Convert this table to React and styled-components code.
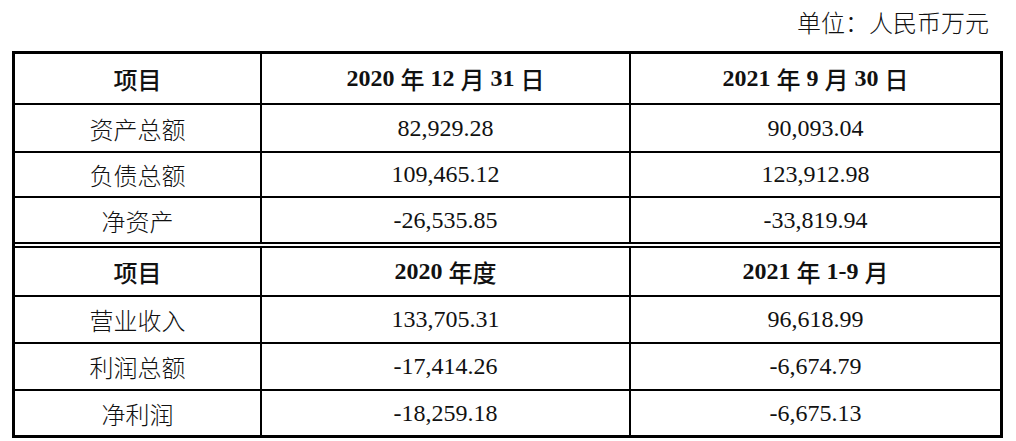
import React from 'react'
import styled, {createGlobalStyle} from 'styled-components'

const GlobalStyle = createGlobalStyle`
  body {
    margin: 0;
    background: #ffffff;
    font-family: "Liberation Serif", "Noto Sans CJK SC", serif;
    color: #111111;
  }
`

const Page = styled.div`
  width: 1016px;
  height: 441px;
  padding-left: 12px;
  box-sizing: border-box;
  overflow: hidden;
`

const Unit = styled.div`
  height: 51px;
  box-sizing: border-box;
  padding: 7px 14px 0 0;
  width: 991px;
  text-align: right;
  font-size: 24px;
  line-height: 30px;
  font-weight: 300;
  font-family: "Noto Sans CJK SC", sans-serif;
`

const Table = styled.div`
  width: 991px;
  border: 3px solid #000;
  box-sizing: border-box;
  display: flex;
  flex-direction: column;
`

const Row = styled.div`
  display: grid;
  grid-template-columns: 245px 369px 1fr;
  height: ${props => props.h}px;
  border-top: ${props => props.double ? '6px double #000' : props.first ? 'none' : '2px solid #000'};
`

const Cell = styled.div`
  display: flex;
  align-items: center;
  justify-content: center;
  border-left: ${props => props.first ? 'none' : '2px solid #000'};
  font-size: 24px;
  font-weight: ${props => props.head ? 700 : 400};
  white-space: pre;
`

const Cn = styled.span`
  font-family: "Noto Sans CJK SC", sans-serif;
  font-weight: ${props => props.bold ? 500 : 300};
`

const head1 = [
  <Cn bold>项目</Cn>,
  <>2020 <Cn bold>年</Cn> 12 <Cn bold>月</Cn> 31 <Cn bold>日</Cn></>,
  <>2021 <Cn bold>年</Cn> 9 <Cn bold>月</Cn> 30 <Cn bold>日</Cn></>,
]
const head2 = [
  <Cn bold>项目</Cn>,
  <>2020 <Cn bold>年度</Cn></>,
  <>2021 <Cn bold>年</Cn> 1-9 <Cn bold>月</Cn></>,
]

const part1 = [
  ['资产总额', '82,929.28', '90,093.04', 46],
  ['负债总额', '109,465.12', '123,912.98', 43],
  ['净资产', '-26,535.85', '-33,819.94', 44],
]
const part2 = [
  ['营业收入', '133,705.31', '96,618.99', 45],
  ['利润总额', '-17,414.26', '-6,674.79', 45],
  ['净利润', '-18,259.18', '-6,675.13', 44],
]

const HeadRow = ({cells, h, first, double}) => (
  <Row h={h} first={first} double={double}>
    {cells.map((c, i) => <Cell key={i} first={i === 0} head>{c}</Cell>)}
  </Row>
)

const DataRow = ({row}) => (
  <Row h={row[3]}>
    <Cell first><Cn>{row[0]}</Cn></Cell>
    <Cell>{row[1]}</Cell>
    <Cell>{row[2]}</Cell>
  </Row>
)

const App = () => (
  <Page>
    <GlobalStyle/>
    <Unit>单位：人民币万元</Unit>
    <Table>
      <HeadRow cells={head1} h={49} first/>
      {part1.map(r => <DataRow key={r[0]} row={r}/>)}
      <HeadRow cells={head2} h={47} double/>
      {part2.map(r => <DataRow key={r[0]} row={r}/>)}
    </Table>
  </Page>
)

export default App
